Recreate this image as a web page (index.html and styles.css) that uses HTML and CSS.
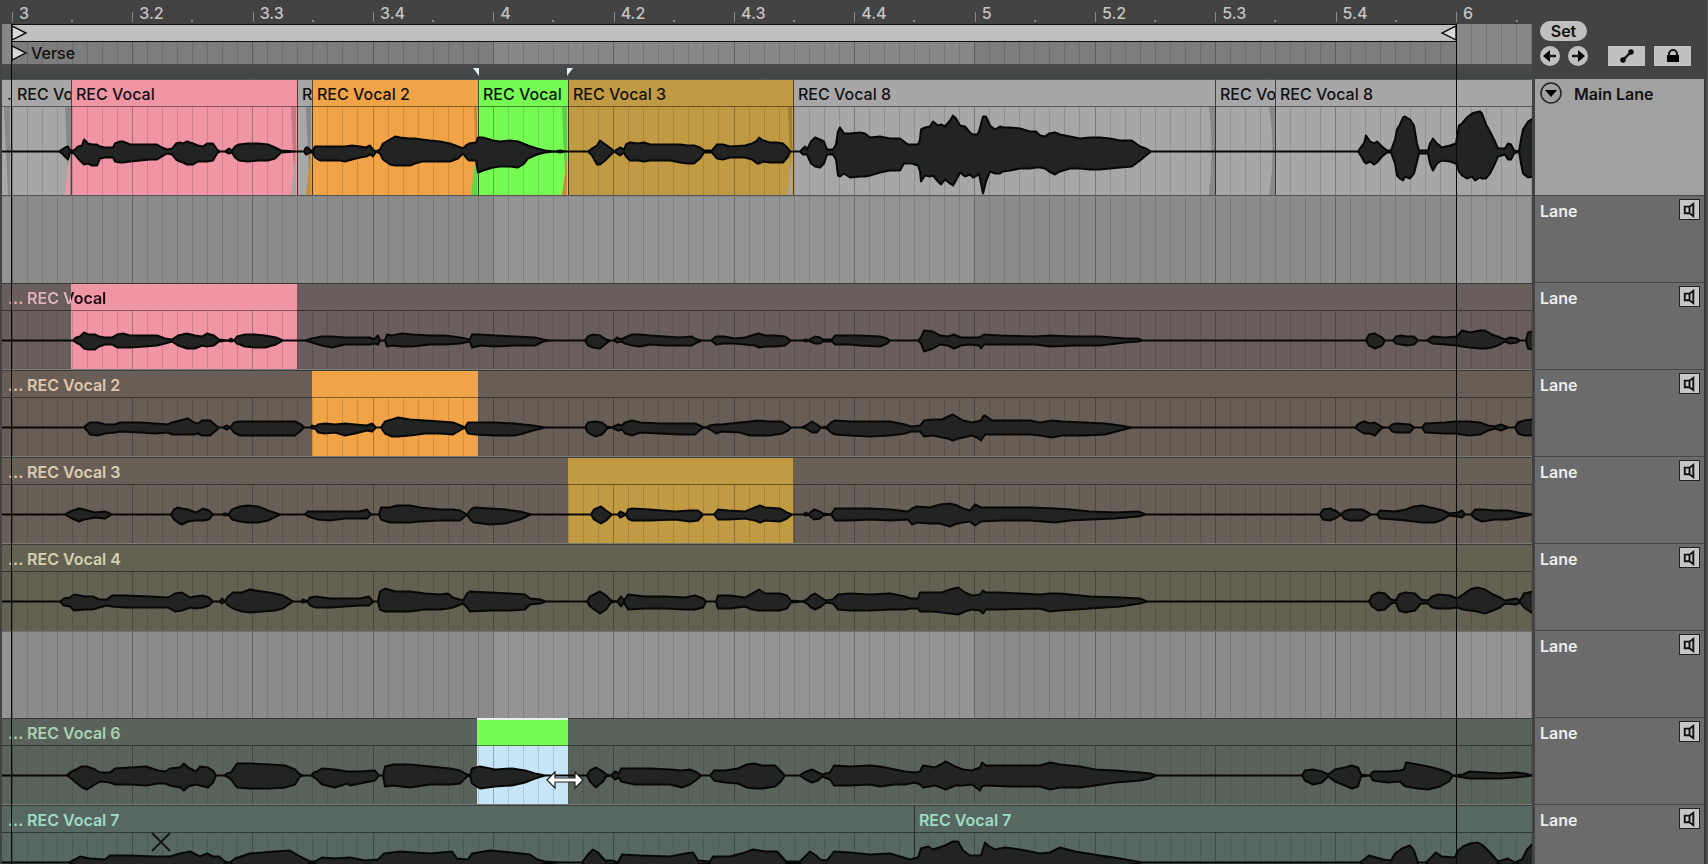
FILE: index.html
```html
<!DOCTYPE html>
<html lang="en">
<head>
<meta charset="utf-8">
<title>Arrangement – Take Lanes</title>
<link rel="stylesheet" href="styles.css">
</head>
<body>
<main class="app">
  <section class="timeline" aria-label="Timeline">
    <div class="stage">
      <div class="ruler">
        <span class="ruler-lead"></span>
        <span class="beat">3</span><span class="beat">3.2</span><span class="beat">3.3</span><span class="beat">3.4</span>
        <span class="beat">4</span><span class="beat">4.2</span><span class="beat">4.3</span><span class="beat">4.4</span>
        <span class="beat">5</span><span class="beat">5.2</span><span class="beat">5.3</span><span class="beat">5.4</span>
        <span class="beat beat-last">6</span>
      </div>
      <div class="loop-row">
        <svg class="canvas canvas-full" data-shade="1" viewBox="2 0 1530 18" preserveAspectRatio="none"></svg>
        <span class="loop-lead"></span>
        <div class="loop-bar">
          <svg class="flag" viewBox="0 0 16 16"><path d="M0 1L14 8L0 15Z"/></svg>
          <svg class="flag" viewBox="0 0 16 16"><path d="M16 1L2 8L16 15Z"/></svg>
        </div>
        <span class="loop-tail"></span>
      </div>
      <div class="locator-row">
        <svg class="canvas canvas-full" data-shade="1" viewBox="2 0 1530 22" preserveAspectRatio="none"></svg>
        <span class="loop-lead"></span>
        <div class="locator"><svg class="flag" viewBox="0 0 16 16"><path d="M0 1L14 8L0 15Z"/></svg>Verse</div>
      </div>
      <div class="gap-row">
        <svg class="canvas canvas-full" viewBox="2 0 1530 15" preserveAspectRatio="none"><path class="mark" d="M473 4H479V12ZM567 4H573L567 12Z"/></svg>
      </div>

      <div class="main-lane">
        <div class="clip gray seamless" style="flex-grow:10"><div class="clip-title">.</div></div>
        <div class="clip gray seamless" style="flex-grow:59"><div class="clip-title">REC Vo</div></div>
        <div class="clip pink" style="flex-grow:226"><div class="clip-title">REC Vocal</div></div>
        <div class="clip gray" style="flex-grow:15"><div class="clip-title">R</div></div>
        <div class="clip orange" style="flex-grow:166"><div class="clip-title">REC Vocal 2</div></div>
        <div class="clip green" style="flex-grow:90"><div class="clip-title">REC Vocal</div></div>
        <div class="clip gold" style="flex-grow:225"><div class="clip-title">REC Vocal 3</div></div>
        <div class="clip gray" style="flex-grow:422"><div class="clip-title">REC Vocal 8</div></div>
        <div class="clip gray" style="flex-grow:60"><div class="clip-title">REC Vo</div></div>
        <div class="clip gray" style="flex-grow:257"><div class="clip-title">REC Vocal 8</div></div>
        <svg class="canvas canvas-body" data-wave="main" viewBox="2 0 1530 88" preserveAspectRatio="none">
          <path class="fade" d="M4 0L8 88H10V0ZM65 0Q67 60 70 88H71V0ZM291 0Q293 60 296 88V0ZM306 0Q308 60 311 88V0ZM1209 0Q1214 44 1209 88H1215V0ZM1269 0Q1276 44 1269 88H1275V0Z"/>
          <path class="fade" d="M474 0L477 88V0ZM562 0Q564 60 567 88V0ZM788 0Q790 60 792 88V0Z"/>
          <path class="fade-pink" d="M70 40L65 88H70Z"/><path class="fade-orange" d="M311 40L306 88H311Z"/>
          <path class="fade-green" d="M477 40L471 88H477Z"/><path class="fade-gray" d="M296 40L291 88H296ZM792 40L788 88H792Z"/>
          <path class="fade-orange" d="M567 50L562 88H567Z"/>
        </svg>
      </div>

      <div class="lane empty"><svg class="canvas canvas-full" data-shade="1" viewBox="2 0 1530 86" preserveAspectRatio="none"></svg></div>

      <div class="lane take take-1">
        <div class="pick pink" style="left:4.51%;width:14.77%"></div>
        <div class="take-title"><span class="dots">...</span><span class="split-title">REC Vocal</span></div>
        <svg class="canvas wave" data-wave="take1" viewBox="2 0 1530 58" preserveAspectRatio="none"></svg>
      </div>
      <div class="lane take take-2">
        <div class="pick orange" style="left:20.26%;width:10.85%"></div>
        <div class="take-title"><span class="dots">...</span><span>REC Vocal 2</span></div>
        <svg class="canvas wave" data-wave="take2" viewBox="2 0 1530 58" preserveAspectRatio="none"></svg>
      </div>
      <div class="lane take take-3">
        <div class="pick gold" style="left:36.99%;width:14.7%"></div>
        <div class="take-title"><span class="dots">...</span><span>REC Vocal 3</span></div>
        <svg class="canvas wave" data-wave="take3" viewBox="2 0 1530 58" preserveAspectRatio="none"></svg>
      </div>
      <div class="lane take take-4">
        <div class="take-title"><span class="dots">...</span><span>REC Vocal 4</span></div>
        <svg class="canvas wave" data-wave="take4" viewBox="2 0 1530 58" preserveAspectRatio="none"></svg>
      </div>
      <div class="lane empty soft"><svg class="canvas canvas-full" data-shade="1" viewBox="2 0 1530 86" preserveAspectRatio="none"></svg></div>
      <div class="lane take take-6">
        <div class="pick active" style="left:31.05%;width:5.95%"></div>
        <div class="take-title"><span class="dots">...</span><span>REC Vocal 6</span></div>
        <svg class="canvas wave" data-wave="take6" viewBox="2 0 1530 58" preserveAspectRatio="none"></svg>
      </div>
      <div class="lane take take-7">
        <div class="take-title"><span class="dots">...</span><span>REC Vocal 7</span></div>
        <div class="take-part" style="left:59.6%">REC Vocal 7</div>
        <svg class="canvas wave" data-wave="take7" viewBox="2 0 1530 58" preserveAspectRatio="none"></svg>
      </div>

      <span class="bound bound-start"></span>
      <span class="bound bound-end"></span>
      <svg class="pointer pointer-trim" viewBox="0 0 40 20"><path d="M2 10L10 2V8H30V2L38 10L30 18V12H10V18Z"/></svg>
      <svg class="pointer pointer-cross" viewBox="0 0 20 20"><path d="M1 1L19 19M19 1L1 19"/></svg>
    </div>
  </section>

  <aside class="panel" aria-label="Lane headers">
    <div class="tools">
      <button class="set" type="button">Set</button>
      <div class="tool-row">
        <button class="round" type="button" aria-label="Previous locator"><svg viewBox="0 0 20 20"><path class="solid" d="M3 10L10 4V16Z"/><path class="line" d="M9 10H16"/></svg></button>
        <button class="round" type="button" aria-label="Next locator"><svg viewBox="0 0 20 20"><path class="solid" d="M17 10L10 4V16Z"/><path class="line" d="M4 10H11"/></svg></button>
        <button class="flat flat-first" type="button" aria-label="Show automation"><svg viewBox="0 0 36 20"><circle cx="14" cy="14" r="2.7"/><circle cx="22" cy="6" r="2.7"/><path class="line" d="M14 14L22 6"/></svg></button>
        <button class="flat" type="button" aria-label="Lock envelopes"><svg viewBox="0 0 36 20"><rect x="12" y="9" width="12" height="7"/><path class="ring" d="M14 10V8a4 4 0 0 1 8 0V10"/></svg></button>
      </div>
    </div>
    <div class="head head-main">
      <button class="fold" type="button" aria-label="Fold lanes"><svg viewBox="0 0 22 22"><circle cx="11" cy="11" r="10"/><path d="M5 8H17L11 15Z"/></svg></button>
      <span>Main Lane</span>
    </div>
    <div class="head"><span>Lane</span><button class="audition" type="button" aria-label="Audition lane 1"><svg viewBox="0 0 20 20"><path d="M5 7H10V14H5ZM10 7L14 4V17L10 14"/></svg></button></div>
    <div class="head"><span>Lane</span><button class="audition" type="button" aria-label="Audition lane 2"><svg viewBox="0 0 20 20"><path d="M5 7H10V14H5ZM10 7L14 4V17L10 14"/></svg></button></div>
    <div class="head"><span>Lane</span><button class="audition" type="button" aria-label="Audition lane 3"><svg viewBox="0 0 20 20"><path d="M5 7H10V14H5ZM10 7L14 4V17L10 14"/></svg></button></div>
    <div class="head"><span>Lane</span><button class="audition" type="button" aria-label="Audition lane 4"><svg viewBox="0 0 20 20"><path d="M5 7H10V14H5ZM10 7L14 4V17L10 14"/></svg></button></div>
    <div class="head"><span>Lane</span><button class="audition" type="button" aria-label="Audition lane 5"><svg viewBox="0 0 20 20"><path d="M5 7H10V14H5ZM10 7L14 4V17L10 14"/></svg></button></div>
    <div class="head"><span>Lane</span><button class="audition" type="button" aria-label="Audition lane 6"><svg viewBox="0 0 20 20"><path d="M5 7H10V14H5ZM10 7L14 4V17L10 14"/></svg></button></div>
    <div class="head"><span>Lane</span><button class="audition" type="button" aria-label="Audition lane 7"><svg viewBox="0 0 20 20"><path d="M5 7H10V14H5ZM10 7L14 4V17L10 14"/></svg></button></div>
    <div class="head"><span>Lane</span><button class="audition" type="button" aria-label="Audition lane 8"><svg viewBox="0 0 20 20"><path d="M5 7H10V14H5ZM10 7L14 4V17L10 14"/></svg></button></div>
  </aside>
</main>
<script src="waves.js"></script>
</body>
</html>
```
FILE: styles.css
```css
* { box-sizing: border-box; }
body {
  margin: 0;
  background: #434343;
  color: #111;
  font: 500 16px/24px Inter, "Liberation Sans", sans-serif;
}
button { margin: 0; padding: 0; border: 0; color: inherit; font: inherit; background: #c0c0c0; }
svg { display: block; }

.app { display: flex; height: 100vh; overflow: hidden; }
.timeline { flex: 1; min-width: 0; padding-left: 2px; }
.stage { position: relative; }

/* ruler */
.ruler { display: flex; height: 24px; color: #c4c4c4; }
.ruler-lead { flex: 30 0 0; }
.beat {
  flex: 361 0 0;
  min-width: 0;
  text-indent: 7px;
  line-height: 27px;
  background:
    linear-gradient(#8a8a8a, #8a8a8a) 0 12px / 1px 10px no-repeat,
    linear-gradient(#8a8a8a, #8a8a8a) 50% 20px / 2px 2px no-repeat;
}
.beat-last {
  flex-grow: 228;
  background-position: 0 12px, 60px 20px;
}

.loop-row, .locator-row { position: relative; display: flex; background: #7d7d7d; }
.loop-row { height: 18px; }
.locator-row { height: 22px; }
.loop-lead { flex: 10 0 0; }
.loop-tail { flex: 76 0 0; }
.loop-bar {
  position: relative;
  flex: 1444 0 0;
  display: flex;
  justify-content: space-between;
  background: #c0c0c0;
  border: solid #0c0c0c;
  border-width: 1px 0;
}
.locator { position: relative; flex: 1520 0 0; display: flex; align-items: center; gap: 3px; line-height: 24px; }
.flag { width: 16px; height: 16px; fill: #d8d8d8; stroke: #111; stroke-width: 1.4; }
.gap-row { position: relative; height: 15px; background: linear-gradient(#4b4b4b, #414444); }
.mark { fill: #dff2f4; }

/* canvases holding grid and waveform */
.canvas { width: 100%; overflow: hidden; }
.canvas-full { position: absolute; inset: 0; height: 100%; }
.shade { fill: #fff; opacity: .08; }
.grid { stroke: #000; stroke-opacity: .13; fill: none; shape-rendering: crispEdges; }
.grid-beat { stroke: #000; stroke-opacity: .28; fill: none; shape-rendering: crispEdges; }
.shape { fill: #222323; stroke: #070707; stroke-width: 2; stroke-linejoin: round; }

/* main lane */
.main-lane {
  position: relative;
  display: flex;
  height: 117px;
  border: solid #565656;
  border-width: 1px 0;
}
.clip { flex: 1 0 0; min-width: 0; overflow: hidden; box-shadow: inset 1px 0 rgba(0, 0, 0, .6); }
.clip.seamless { box-shadow: none; }
.clip-title {
  height: 27px;
  text-indent: 5px;
  line-height: 28px;
  white-space: nowrap;
  border-bottom: 1px solid rgba(0, 0, 0, .45);
}
.gray { background: #a7a7a7; }
.pink { background: #f095a4; }
.orange { background: #f1a447; }
.green { background: #76fb54; }
.gold { background: #c19b43; }
.canvas-body { position: absolute; left: 0; top: 27px; height: 88px; }
.fade { fill: #000; opacity: .18; }
.fade-pink { fill: #f095a4; }
.fade-orange { fill: #c98d35; }
.fade-green { fill: #5fd845; }
.fade-gray { fill: #a5a5a5; }

/* take lanes */
.lane { position: relative; height: 87px; border-top: 1px solid #393c3a; }
.empty { background: #8b8b8b; border-top-color: #858585; }
.soft { border-top-color: #707070; }
.take { border-bottom: 1px solid #7b7b77; font-weight: 600; }
.take-title {
  position: relative;
  display: flex;
  height: 27px;
  padding-left: 6px;
  line-height: 28px;
  border-bottom: 1px solid rgba(0, 0, 0, .45);
}
.dots { flex: 0 0 19px; }
.wave { position: relative; height: 58px; }
.take-1 { background: #6a5d5d; color: #e0b3ba; }
.take-2 { background: #685e55; color: #dfc5ae; }
.take-3 { background: #685f56; color: #dccbb2; }
.take-4 { background: #626152; color: #d4d0ae; border-bottom-color: #626152; }
.take-6 { background: #59635b; color: #aad0b2; }
.take-7 { background: #566861; color: #a0dac5; }
.split-title {
  background: linear-gradient(90deg, #e0b3ba 44px, #1c0f11 44px);
  background-clip: text;
  -webkit-background-clip: text;
  color: transparent;
}
.pick { position: absolute; top: 0; bottom: 0; }
.active {
  top: -1px;
  border-top: 2px solid #e6f3e6;
  background: linear-gradient(#76fb54 26px, #c6e6f8 26px);
}
.take-part {
  position: absolute;
  top: 0;
  bottom: 0;
  padding-left: 4px;
  line-height: 28px;
  border-left: 1px solid #262e2b;
}

/* overlays */
.bound { position: absolute; top: 24px; bottom: 0; width: 1px; background: #080808; }
.bound-start { left: calc(100% * 9 / 1530); }
.bound-end { left: calc(100% * 1454 / 1530); }
.pointer { position: absolute; }
.pointer-trim { left: calc(100% * 543 / 1530); top: 770px; width: 40px; height: 20px; fill: #fff; stroke: #222; stroke-width: 1.2; }
.pointer-cross { left: calc(100% * 149 / 1530); top: 832px; width: 20px; height: 20px; fill: none; stroke: #141414; stroke-width: 1.8; }

/* right-hand panel */
.panel { flex: 0 0 176px; padding: 0 2px 0 3px; border-right: 1px solid #5c5c5c; }
.tools { height: 79px; padding: 21px 5px 0; }
.set { display: block; width: 47px; height: 20px; border-radius: 10px; line-height: 20px; font-weight: 600; }
.tool-row { display: flex; gap: 8px; margin-top: 5px; }
.round { width: 20px; height: 20px; border-radius: 50%; }
.flat { width: 37px; height: 20px; }
.flat svg { margin: 0 auto; width: 36px; height: 20px; }
.flat-first { margin: 0 1px 0 12px; }
.line { fill: none; stroke: #111; stroke-width: 2.4; }
.ring { fill: none; stroke: #111; stroke-width: 2; }
.head {
  display: flex;
  justify-content: space-between;
  align-items: flex-start;
  height: 87px;
  padding: 3px 4px 0 5px;
  line-height: 24px;
  color: #ededed;
  font-weight: 600;
  background: #6b6b6b;
  border-bottom: 1px solid #484848;
  border-right: 1px solid #333;
}
.head-main { height: 117px; justify-content: flex-start; gap: 12px; color: #111; background: #a1a1a1; }
.fold { width: 22px; height: 22px; border-radius: 50%; background: none; }
.fold circle { fill: none; stroke: #222; stroke-width: 1.5; }
.audition { width: 21px; height: 21px; border: 1px solid #222; background: #c6c6c6; }
.audition svg { width: 19px; height: 19px; fill: none; stroke: #111; stroke-width: 2; }
```
FILE: waves.js
```js
// Envelope points: x, height above the axis, height below it (same as above when left out).
const WAVES = {
  main: `2,0 59,0 62,2 65,4,5 68,5,8 70,1 74,1,2 78,5,7 82,6,11 84,12,13 88,8,12 92,7,14 97,7,14 100,5,7 105,4,6 113,4,6 115,8,10 120,10,11 123,10,11 130,7,10 140,7,9 150,7,8 157,7,8 162,4,5 167,2 172,3 176,8 180,9,10 183,8,11 187,10,13 193,8,13 198,6,10 203,5,10 207,8,10 213,8,9 217,2 220,0 225,0 229,3,2 232,1 235,5,6 239,7,9 248,8,10 258,8,9 268,7,9 275,4,7 281,1 296,0 304,0 306,4,3 308,4,2 310,1 313,1 315,5,6 320,5,9 330,5,9 340,5,9 345,5,10 352,6,8 360,5,6 366,4,5 370,6,3 373,2,5 376,0 380,2 383,8 390,12,13 395,15,14 400,14,14 410,13,14 415,13,12 422,12,10 430,11,10 440,10 450,8,10 458,5,7 463,3,2 466,6 469,8,9 476,9 478,14,21 483,14,19 493,11,16 500,10,15 510,11,15 518,10,16 523,8,13 528,6,7 537,3 545,1 555,0 560,1 565,0 588,0 592,3,4 597,6,13 600,11,13 604,8,10 611,3 614,0 617,2 620,4 624,2,1 626,7,5 630,9 638,8,9 644,9,10 650,7,9 660,7,9 670,7,9 680,7,11 688,6,12 694,6,12 700,4,7 704,1 712,1 717,7 723,7,8 730,5,6 745,6 752,8 757,11,12 759,14,12 763,11,10 770,9,11 777,9,11 783,8,11 788,3,5 790,0 800,0 803,3 805,5,3 807,2,3 811,10,12 815,14,15 820,12,16 824,10,12 827,2,3 833,2,3 836,7,8 838,20,24 840,24,25 844,18,22 850,18,26 860,19,25 865,18,25 870,14,24 880,15,21 890,13,19 900,13,19 904,10,12 908,7,12 912,7,12 918,7,14 920,12,20 921,22,30 925,24,24 930,25,25 933,30,24 938,26,30 941,27,33 945,25,28 950,31,32 953,36,34 956,33,29 960,26,21 965,25,25 970,19,23 973,17,26 977,17,24 979,20,22 983,35,42 986,35,30 990,26,20 995,22 1000,25,22 1003,24,20 1010,24,19 1020,23,17 1030,20,17 1036,20,16 1040,16 1045,15,17 1049,18,20 1055,19,23 1060,17,20 1070,15,17 1080,13,17 1090,14,18 1100,14,18 1110,13,17 1120,11,16 1132,11,15 1140,5,9 1146,3,4 1151,0 1340,0 1358,0 1362,6 1364,8,10 1366,16,12 1370,10 1374,8,13 1377,10,11 1382,5 1387,1 1391,1 1395,12 1397,22,24 1400,27 1403,34,29 1405,35,25 1410,32,27 1414,26,22 1417,8,10 1419,1,2 1428,1,2 1430,8,12 1433,13,19 1437,8,12 1442,4,9 1450,6,10 1456,8,12 1459,26,20 1462,28,24 1467,34,27 1472,38,25 1475,39,29 1480,40,26 1482,38,27 1486,27 1490,20,22 1494,12,14 1498,3,5 1505,3 1508,8 1511,7,8 1514,1,2 1519,0 1521,12 1523,22 1528,30,26 1533,33,25`,
  take1: `2,0 73,0 76,3,2 80,4 84,8 88,6,9 95,6,9 99,4,6 105,3,4 112,3,4 117,6,7 123,7 130,5,7 145,5,6 157,5 165,2,3 172,1 178,5 187,7,8 195,5,8 202,4,5 207,7,6 214,5 219,1 228,0 231,2,1 234,0 237,4,3 245,6 255,6,7 265,5,7 276,3,4 283,0 305,0 312,2 322,4,5 332,4,7 345,3,4 360,3,4 370,3,4 374,1,3 378,5,4 380,0 385,0 387,6 392,5 402,7,6 412,6 430,5,4 445,5,4 460,3 470,1 472,6,7 480,6,5 495,5,6 515,4,5 535,3,5 543,1 550,0 585,0 588,4,5 593,6,7 600,5,8 606,1,3 610,0 614,0 617,3,2 621,1 625,3 632,6,5 640,6 650,5,4 665,4,5 680,3,5 692,4,5 697,1,2 702,0 711,0 716,4 724,4,3 735,2,3 745,3,4 755,6,5 759,7 765,5,6 775,5,6 785,4,5 791,0 803,0 806,1 808,0 815,4,3 820,3 823,1 832,1 835,5,4 850,5,4 860,5 880,4,6 887,2,3 890,0 918,0 921,3 924,10,11 933,9,8 940,5,4 948,4,5 954,6,8 961,3,5 970,3,4 979,3,5 981,4,8 984,6,4 1000,5,4 1035,4 1050,5,6 1075,4,5 1100,4,5 1125,2 1138,2,1 1142,0 1366,0 1369,6,5 1375,7,8 1382,3,5 1385,0 1393,0 1396,4,3 1401,5,4 1407,4,5 1414,4 1418,0 1427,0 1432,4,3 1445,3,4 1457,4,5 1462,10,6 1470,8,7 1480,10,8 1485,10,8 1492,6,7 1500,3,4 1505,1 1510,3 1517,2 1520,0 1526,0 1528,8 1533,9`,
  take2: `2,0 84,0 87,3 90,5,7 98,5,8 105,3,6 115,3,5 120,5,4 140,5 155,4,6 168,3,5 172,5,7 180,7 188,9,7 194,5,7 198,4,6 202,7,8 210,7,8 216,2,3 219,0 223,0 227,2 230,0 234,5 240,6,8 260,6,8 280,6,8 295,6,8 301,3 304,0 311,0 312,2,1 315,1 318,3,5 325,4,6 335,3,5 345,4,8 355,3,6 367,2,3 372,4 376,0 381,0 385,6 392,8,9 398,10,9 410,8 425,7,6 440,6 453,5,7 463,1 465,0 468,5,6 475,5,7 495,5,8 515,4,8 523,3,6 533,2,3 545,0 585,0 588,5 595,6,9 602,5,7 607,1 612,0 618,3 622,2 625,5,6 632,7,8 640,5 660,4,6 680,4,7 695,4,7 702,1 706,0 710,2 716,3,6 722,3,4 740,5 750,6,8 757,7,8 770,6,8 782,6 788,2,3 791,0 802,0 806,2,1 812,6,5 817,3,5 821,0 827,1 831,5 835,7 850,6,8 870,6,9 890,6,8 905,3,6 911,1,4 920,2,4 924,7,9 933,8 942,8,10 948,11 953,13 958,10,11 963,7,10 972,5,8 977,6,10 981,7,13 983,11,10 985,12,7 992,7 1010,7 1030,7 1040,5,8 1052,7,10 1062,6,8 1085,5,8 1105,4,7 1120,2,3 1132,0 1355,0 1359,4,3 1364,6 1370,4,6 1375,5,8 1381,1 1385,0 1389,0 1392,3,4 1397,4,5 1410,3,5 1414,0 1422,0 1425,4,5 1445,5,6 1456,6 1468,6,8 1480,5,7 1488,2,3 1495,1 1501,3 1508,0 1515,0 1518,5,6 1524,7,8 1533,8`,
  take3: `2,0 65,0 70,3 79,6,7 84,5 95,2,3 105,3,4 112,0 171,0 174,5 178,7,8 182,6,10 188,5,7 196,2,6 203,6 209,4,5 213,0 222,0 225,1 228,0 232,5 240,8,7 248,9,8 258,8 268,4,6 274,2,3 280,0 305,0 308,3,2 318,3,5 330,3,6 345,3,4 358,3,4 364,4 367,5,4 371,0 379,0 381,7,5 390,7,8 397,9,8 410,9,8 420,7 440,5,6 452,5,6 460,4,6 467,0 471,5,6 474,7,8 490,6,10 505,5,9 520,3,5 531,0 591,0 594,5 601,8,9 606,4,6 612,0 618,0 620,3 626,0 628,5,4 632,6 650,5,6 675,3,5 690,4,7 698,4,6 703,0 714,0 718,5 728,4,5 745,3,4 755,7,6 760,9,8 765,7,6 780,6,7 787,2,4 792,0 803,0 806,2,1 808,0 814,5 820,3,4 823,1 831,0 835,6 850,6 870,6,5 890,5,6 908,3,5 912,6,10 917,8 930,7,9 940,10,9 950,11,12 957,9 963,6,8 970,4,7 975,10,11 981,7 1000,7,6 1030,7,6 1055,6,8 1070,5,6 1090,3,5 1115,2,4 1138,3,2 1146,0 1320,0 1323,5 1330,6 1337,3 1341,0 1344,3,4 1350,5,6 1362,5,6 1368,2 1371,0 1377,0 1380,4 1395,3,5 1406,5,6 1414,8,7 1422,9,8 1435,6,8 1443,4,5 1449,1 1458,2 1462,4,3 1465,0 1471,0 1475,5,4 1482,5,7 1495,4,5 1508,4,5 1518,2,3 1532,0`,
  take4: `2,0 60,0 64,3,4 70,4,5 74,7,9 85,5,8 93,5,8 99,2,6 107,2,4 112,6,5 125,6 150,5,6 168,4,6 175,8,10 182,9 190,4,6 195,5,7 203,6 209,4 213,0 220,0 222,3,2 225,0 228,5,4 233,9,7 242,9,10 250,12,11 262,10 275,8,9 283,6,7 290,2 293,0 301,0 303,2,1 307,0 310,4 316,5,6 330,3,6 345,3,5 360,3,4 369,5,4 373,0 378,0 380,10,8 385,13,10 395,10 410,10 425,8 440,7,8 448,8,7 453,4,6 463,1,2 467,8,6 470,10 490,9 510,8,9 525,7,8 530,3 540,2 546,0 587,0 590,5 600,10,12 606,6,8 611,1 617,0 621,5 624,1 628,7,8 645,5,7 665,5,7 685,4,8 695,6,8 703,3,6 706,0 716,0 718,6,7 730,6,7 745,4,5 752,8 759,12,9 765,8,9 780,8,9 787,6,7 791,1 803,0 807,2 811,6 815,8 821,4,5 826,1 833,2 838,7,8 850,8,9 870,7,9 890,8 905,5,8 911,3,7 918,3,7 920,9,10 933,9,10 942,9,11 950,12 958,14,13 965,9,10 972,6,8 980,7,9 983,11,12 986,9,8 1000,9,8 1040,7 1050,8,10 1060,8,9 1090,5,7 1120,4,5 1140,3,2 1147,0 1369,0 1372,6,5 1378,9 1385,8 1391,2 1396,1 1399,7,9 1405,9,11 1415,8,9 1421,2 1428,1,2 1432,5,6 1438,7 1450,6,7 1457,3,6 1463,7,8 1470,12,9 1477,14,10 1485,12 1493,7,9 1500,4,6 1505,1,2 1516,3 1520,1 1524,8,6 1533,10,12`,
  take6: `2,0 67,0 70,3,2 76,6,7 82,9,12 87,9,14 95,6,9 100,3,6 110,3,7 115,7,9 130,8,9 146,9,10 158,5,8 165,4,8 170,7,10 180,8,12 184,12,15 188,8,11 196,4,9 200,9,10 208,8,12 213,5,7 216,0 224,0 227,2,1 231,3,4 237,12 250,12,13 270,11,13 285,10,12 295,6,9 300,1 304,0 311,0 314,3,2 317,4 322,7,9 335,6,12 347,4,8 350,4,10 360,4,8 375,5 379,0 383,0 385,9,11 393,11,10 410,11,12 430,9 450,7,9 460,5,8 467,1 470,0 472,7,8 480,9,13 495,6,11 512,7,10 525,5,7 535,2,3 545,0 587,0 590,5,6 596,8,12 603,4,6 606,1 611,0 615,4 619,2 621,7,6 635,7,9 650,7,9 670,6,9 682,5,12 690,6,9 697,3,4 701,0 710,0 714,5 725,5,7 738,7,8 747,11,12 755,12,13 762,10,13 775,10,11 781,4,6 785,0 800,0 804,3 812,6,7 818,3,5 822,1 830,3,4 834,10 850,9,10 870,10,9 880,9,11 895,6,9 905,4,9 915,3,7 920,4,9 923,10,12 935,8,10 946,14 955,9,10 963,6,10 972,5,9 980,8,15 982,13,11 986,10 1010,10,11 1040,10,11 1050,13,14 1060,11,12 1080,9,12 1095,6,10 1115,5,7 1140,3,5 1150,2,3 1156,0 1302,0 1305,5 1313,6,9 1322,4,7 1328,1 1335,6 1345,8,10 1352,10,13 1358,8,11 1361,1 1370,0 1373,4,5 1388,4,7 1400,5,6 1404,6,10 1406,13,11 1418,11,13 1428,9,14 1440,6,11 1449,3,6 1453,0 1463,1,2 1470,4,3 1500,2,3 1515,3,2 1525,2,1 1532,0`,
  take7: `2,0 69,0 75,3 80,6 90,4 105,3 110,7 130,7 155,6 170,6 180,9 190,11 200,6 207,9 213,6 219,6 225,1 230,0 235,4 250,9 275,11 290,12 300,6 310,1 315,1 322,5 335,4 350,5 365,2 378,3 384,9 400,11 430,9 452,11 457,4 468,3 472,9 490,12 512,10 530,8 537,3 545,1 560,0 582,0 588,8 593,13 598,10 605,2 612,2 618,0 622,8 640,7 670,6 685,9 693,10 698,2 710,1 713,6 730,6 745,10 753,13 765,11 777,11 786,1 800,1 805,6 810,11 816,7 820,3 827,2 834,11 850,10 870,8 890,9 900,6 910,3 918,5 921,14 928,16 933,13 945,17 953,21 958,21 963,12 970,7 981,7 985,20 988,17 995,13 1005,15 1020,13 1040,9 1050,10 1060,15 1075,11 1100,7 1120,4 1142,0 1360,0 1364,3 1369,7 1376,5 1383,3 1391,2 1395,9 1402,14 1410,17 1414,12 1418,0 1426,0 1431,5 1436,10 1442,6 1455,5 1458,12 1463,16 1470,19 1478,20 1483,17 1490,10 1498,1 1508,4 1515,0 1522,3 1527,13 1533,19`
};

const NS = 'http://www.w3.org/2000/svg';
const ORIGIN = 12;
const BEAT = 1444 / 12;
const RIGHT = 1532;

function addPath(svg, className, d) {
  const path = document.createElementNS(NS, 'path');
  path.setAttribute('class', className);
  path.setAttribute('d', d);
  svg.append(path);
}

function drawGrid(svg, height) {
  let fine = '';
  let beats = '';
  for (let i = 0; ORIGIN + i * BEAT / 8 < RIGHT; i++) {
    const line = `M${Math.floor(ORIGIN + i * BEAT / 8) + 0.5} 0V${height}`;
    if (i % 8) fine += line; else beats += line;
  }
  addPath(svg, 'grid', fine);
  addPath(svg, 'grid-beat', beats);
}

function drawWave(svg, points, mid) {
  const top = [];
  const bottom = [];
  for (const point of points.split(' ')) {
    const [x, up, down = up] = point.split(',').map(Number);
    top.push(`${x} ${mid - up}`);
    bottom.unshift(`${x} ${mid + down}`);
  }
  addPath(svg, 'shape', `M${top.join('L')}L${bottom.join('L')}Z`);
}

for (const svg of document.querySelectorAll('[data-shade], [data-wave]')) {
  const height = svg.viewBox.baseVal.height;
  if (svg.dataset.shade) {
    addPath(svg, 'shade', `M0 0H12V${height}H0ZM493 0H974V${height}H493ZM1456 0H1534V${height}H1456Z`);
  }
  drawGrid(svg, height);
  if (svg.dataset.wave) {
    drawWave(svg, WAVES[svg.dataset.wave], Math.floor(height / 2) + 0.5);
  }
}
```
